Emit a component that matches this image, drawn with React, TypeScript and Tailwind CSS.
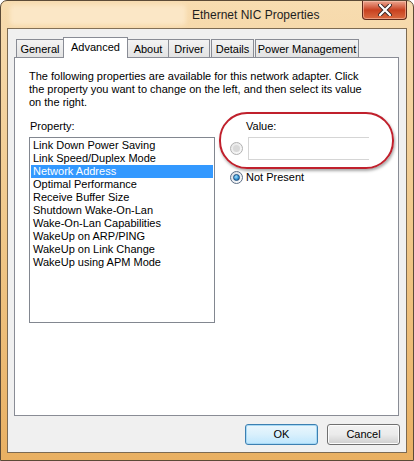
import { useState } from "react";

const properties = [
  "Link Down Power Saving",
  "Link Speed/Duplex Mode",
  "Network Address",
  "Optimal Performance",
  "Receive Buffer Size",
  "Shutdown Wake-On-Lan",
  "Wake-On-Lan Capabilities",
  "WakeUp on ARP/PING",
  "WakeUp on Link Change",
  "WakeUp using APM Mode",
];

const tabs = [
  { label: "General", cls: "w-[48px]" },
  { label: "Advanced", cls: "w-[65px] -ml-px" },
  { label: "About", cls: "w-[42px] -ml-px" },
  { label: "Driver", cls: "w-[42px] -ml-px" },
  { label: "Details", cls: "w-[43px] ml-px" },
  { label: "Power Management", cls: "w-[104px] ml-px" },
];

function Radio({ checked, disabled }: { checked?: boolean; disabled?: boolean }) {
  return (
    <span
      className={`flex h-[13px] w-[13px] shrink-0 items-center justify-center rounded-full border ${
        disabled ? "border-[#b1b1b1] bg-gradient-to-br from-[#e6e6e6] to-[#fbfbfb]" : "border-[#5d6f86] bg-gradient-to-br from-[#d8dde4] to-[#ffffff]"
      }`}
    >
      {checked && (
        <span className="h-[7px] w-[7px] rounded-full border border-[#1c4d7e] bg-[radial-gradient(circle_at_40%_35%,#9fe0ff,#2f8fd0_60%,#16507f)]" />
      )}
      {!checked && disabled && <span className="h-[7px] w-[7px] rounded-full bg-[#d9d9d9]" />}
    </span>
  );
}

export default function App() {
  const [selected, setSelected] = useState(2);

  return (
    <div className="flex h-[461px] w-[414px] flex-col rounded-t-[7px] border border-[#5b4a36] bg-gradient-to-b from-[#f7dcb0] via-[#f0c88a] to-[#e9b062] px-[6px] pb-[7px] font-['Liberation_Sans',Arial,sans-serif] text-[11px] leading-[13px] text-black">
      {/* Title bar */}
      <div className="flex h-[27px] items-start">
        <div className="ml-[3px] mt-[4px] h-[20px] w-[176px] rounded-[3px] bg-[#fbe7c6] blur-[2px]" />
        <div className="ml-[6px] mt-[7px] text-[12px] leading-[15px] text-[#1e1e1e]">Ethernet NIC Properties</div>
        <div className="ml-auto flex h-[19px] w-[45px] items-center justify-center rounded-b-[4px] border border-t-0 border-[#5e2a1c] bg-gradient-to-b from-[#eba58f] via-[#c8401f] to-[#da6a40] shadow-[inset_0_0_0_1px_rgba(255,210,190,0.5)]">
          <svg width="14" height="12" viewBox="0 0 14 12">
            <path d="M2 1 L12 11 M12 1 L2 11" stroke="#3a2a26" strokeWidth="4" strokeLinecap="round" />
            <path d="M2 1 L12 11 M12 1 L2 11" stroke="#ffffff" strokeWidth="2.2" strokeLinecap="round" />
          </svg>
        </div>
      </div>

      {/* Client area */}
      <div className="flex flex-1 flex-col border border-[#7c6a52] bg-[#f0f0f0]">
        {/* Tabs */}
        <div className="relative z-10 -mb-px flex h-[29px] items-end pl-[8px] pt-[8px]">
          {tabs.map((t) =>
            t.label === "Advanced" ? (
              <div key={t.label} className={`${t.cls} flex h-[21px] items-start justify-center border border-b-0 border-[#898c95] bg-white pt-[3px]`}>
                {t.label}
              </div>
            ) : (
              <div
                key={t.label}
                className={`${t.cls} mb-px flex h-[18px] items-center justify-center border border-b-0 border-[#898c95] bg-gradient-to-b from-[#f3f3f3] to-[#e3e3e3] pt-[2px]`}
              >
                {t.label}
              </div>
            )
          )}
        </div>

        {/* Panel */}
        <div className="relative ml-[6px] h-[359px] w-[385px] border border-[#898c95] bg-white">
          <p className="pl-[14px] pr-[30px] pt-[12px]">
            The following properties are available for this network adapter. Click the property you want to change on the left, and then select its value on the right.
          </p>

          <div className="mt-[11px] flex">
            <div className="ml-[14px] flex flex-col">
              <div className="pl-px">Property:</div>
              <div className="mt-[4px] h-[186px] w-[186px] border border-[#828790] bg-white p-px">
                {properties.map((p, i) => (
                  <div
                    key={p}
                    onClick={() => setSelected(i)}
                    className={`h-[13px] pl-[2px] ${i === selected ? "bg-[#3399ff] text-white" : ""}`}
                  >
                    {p}
                  </div>
                ))}
              </div>
            </div>

            <div className="ml-[15px] flex flex-col">
              <div className="pl-[16px]">Value:</div>
              <div className="mt-[4px] flex items-center">
                <Radio disabled />
                <div className="ml-[5px] h-[23px] w-[121px] border border-r-0 border-[#d5d5d5] bg-white" />
              </div>
              <div className="mt-[11px] flex items-center">
                <Radio checked />
                <span className="ml-[3px]">Not Present</span>
              </div>
            </div>
          </div>

          {/* Red annotation */}
          <div className="pointer-events-none absolute left-[204px] top-[54px] h-[57px] w-[175px] rounded-[28px] border-2 border-[#c0202c] shadow-[1px_2px_3px_rgba(0,0,0,0.35)]" />
        </div>

        {/* Buttons */}
        <div className="mr-[6px] mt-[8px] flex justify-end gap-[9px]">
          <button className="h-[21px] w-[73px] rounded-[3px] border border-[#3c7fb1] bg-gradient-to-b from-[#eaf6fd] via-[#d9f0fc] to-[#bee6fd] shadow-[inset_0_0_0_1px_#a7d9f5]">
            OK
          </button>
          <button className="h-[21px] w-[73px] rounded-[3px] border border-[#707070] bg-gradient-to-b from-[#f2f2f2] via-[#ebebeb] to-[#cfcfcf] shadow-[inset_0_0_0_1px_#fcfcfc]">
            Cancel
          </button>
        </div>
      </div>
    </div>
  );
}
